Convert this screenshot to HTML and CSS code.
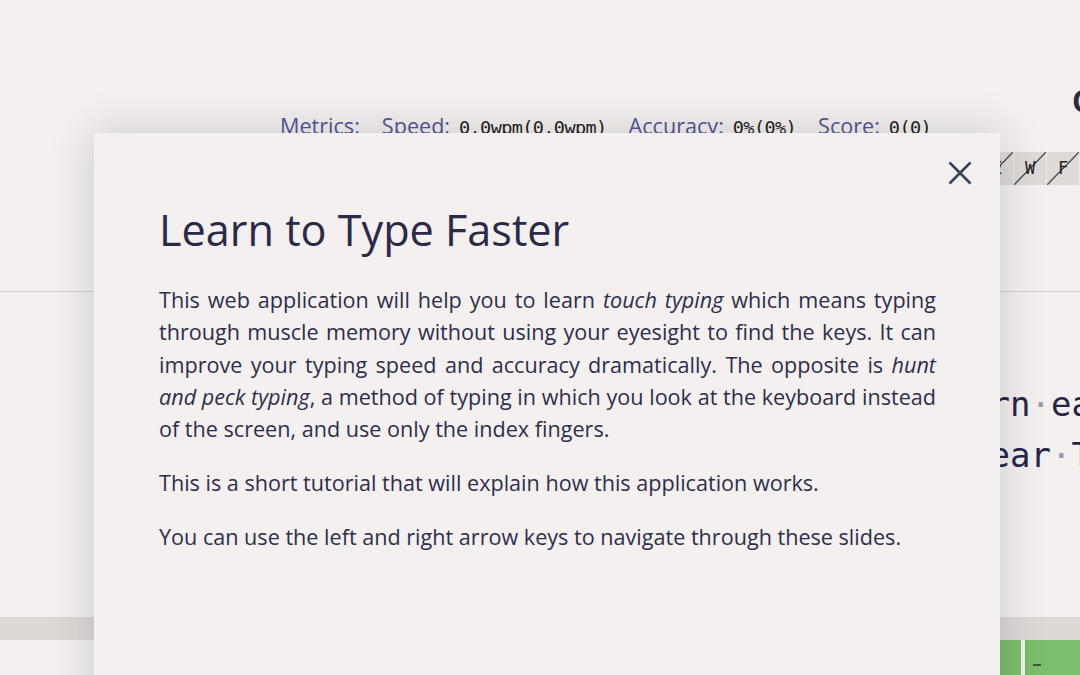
FILE: index.html
```html
<!DOCTYPE html>
<html lang="en">
<head>
  <meta charset="UTF-8">
  <title>Learn to Type Faster</title>
  <link rel="stylesheet" href="styles.css">
</head>
<body>
  <!-- Practice page behind the tutorial -->
  <div class="app">
    <div class="corner">C</div>
    <div class="metrics">
      <span class="label">Metrics:</span>
      <span class="label">Speed:</span>
      <span class="value">0.0wpm(0.0wpm)</span>
      <span class="label">Accuracy:</span>
      <span class="value">0%(0%)</span>
      <span class="label">Score:</span>
      <span class="value">0(0)</span>
    </div>
    <div class="keyset">
      <span class="key">N</span>
      <span class="key">T</span>
      <span class="key">E</span>
      <span class="key">W</span>
      <span class="key">F</span>
    </div>
    <div class="divider"></div>
    <div class="lesson">
      <div class="line">near<span class="sp">·</span>learn<span class="sp">·</span>ear<span class="sp">·</span>learn<span class="sp">·</span>earn<span class="sp">·</span>learn</div>
      <div class="line">learn<span class="sp">·</span>learn<span class="sp">·</span>learn<span class="sp">·</span>ear<span class="sp">·</span>Tear<span class="sp">·</span>near</div>
    </div>
    <div class="keyboard">
      <div class="kb-top"></div>
      <div class="kb-row">
        <span class="kb-key"></span>
        <span class="kb-key wide"><i class="bump"></i></span>
      </div>
    </div>
  </div>

  <!-- Tutorial dialog -->
  <div class="dialog">
    <button class="close" aria-label="Close">
      <svg width="24" height="24" viewBox="0 0 24 24"><path d="M1.5 1.5 L22.5 22.5 M22.5 1.5 L1.5 22.5" stroke="#34425a" stroke-width="2.6" fill="none"/></svg>
    </button>
    <h1>Learn to Type Faster</h1>
    <p>This web application will help you to learn <em>touch typing</em> which means typing through muscle memory without using your eyesight to find the keys. It can improve your typing speed and accuracy dramatically. The opposite is <em>hunt and peck typing</em>, a method of typing in which you look at the keyboard instead of the screen, and use only the index fingers.</p>
    <p>This is a short tutorial that will explain how this application works.</p>
    <p>You can use the left and right arrow keys to navigate through these slides.</p>
  </div>
</body>
</html>
```

FILE: styles.css
```css
/* General */
body {
  margin: 0;
  width: 1080px;
  height: 675px;
  overflow: hidden;
  position: relative;
  background-color: #f3f0ef;
  font-family: 'Open Sans', sans-serif;
  color: #2a2a48;
}

/* Background practice page */
.app {
  display: flex;
  flex-direction: column;
  padding-top: 103px;
}
.corner {
  position: absolute;
  left: 1072px;
  top: 80px;
  font-size: 30px;
  font-weight: 700;
  color: #2a2a48;
}
.metrics {
  display: flex;
  align-items: baseline;
  padding-left: 280px;
  height: 45px;
  line-height: 45px;
}
.metrics .label {
  font-size: 21.6px;
  color: #55559a;
  margin-left: 22px;
}
.metrics .label:first-child {
  margin-left: 0;
}
.metrics .value {
  font-family: 'DejaVu Sans Mono', monospace;
  font-size: 18.5px;
  letter-spacing: -0.6px;
  color: #222;
  margin-left: 9px;
}
.keyset {
  display: flex;
  margin-top: 4px;
  padding-left: 915px;
}
.key {
  width: 33px;
  height: 33px;
  line-height: 33px;
  text-align: center;
  font-family: 'DejaVu Sans Mono', monospace;
  font-size: 17px;
  color: #222;
  background: linear-gradient(to bottom right, transparent calc(50% - 1px), #5a5a5a calc(50% - 0.5px), #5a5a5a calc(50% + 0.5px), transparent calc(50% + 1px)), #dedad8;
  border-right: 1px solid #ebe8e6;
}
.divider {
  margin-top: 106px;
  height: 1px;
  background-color: #d3cfcd;
}
.lesson {
  margin-top: 87px;
  padding-left: 621px;
  font-family: 'DejaVu Sans Mono', monospace;
  font-size: 34px;
  line-height: 51px;
  white-space: nowrap;
  color: #25254a;
}
.sp {
  color: #9c9aa8;
}
.keyboard {
  margin-top: 136px;
}
.kb-top {
  height: 23px;
  background-color: #dcd9d7;
}
.kb-row {
  display: flex;
  gap: 4px;
  padding-left: 956px;
}
.kb-key {
  width: 70px;
  height: 40px;
  background-color: #7cbe6c;
  position: relative;
}
.kb-key.wide {
  width: 60px;
}
.bump {
  position: absolute;
  left: 8px;
  top: 24px;
  width: 8px;
  height: 2px;
  background-color: #3b5a36;
}

/* Tutorial dialog */
.dialog {
  position: absolute;
  left: 94px;
  top: 133px;
  width: 906px;
  height: 620px;
  box-sizing: border-box;
  padding: 71px 64px 0 65px;
  background-color: #f3f0ef;
  box-shadow: 0 0 45px rgba(0, 0, 0, 0.16);
}
.close {
  position: absolute;
  top: 28px;
  right: 28px;
  width: 24px;
  height: 24px;
  padding: 0;
  border: none;
  background: none;
  cursor: pointer;
}
.dialog h1 {
  margin: 0 0 28px;
  font-size: 43.2px;
  font-weight: 400;
  line-height: 1.2;
  color: #2a2a48;
}
.dialog p {
  margin: 0 0 21.6px;
  font-size: 21.6px;
  line-height: 1.5;
  text-align: justify;
  color: #2e2e4c;
}
```
